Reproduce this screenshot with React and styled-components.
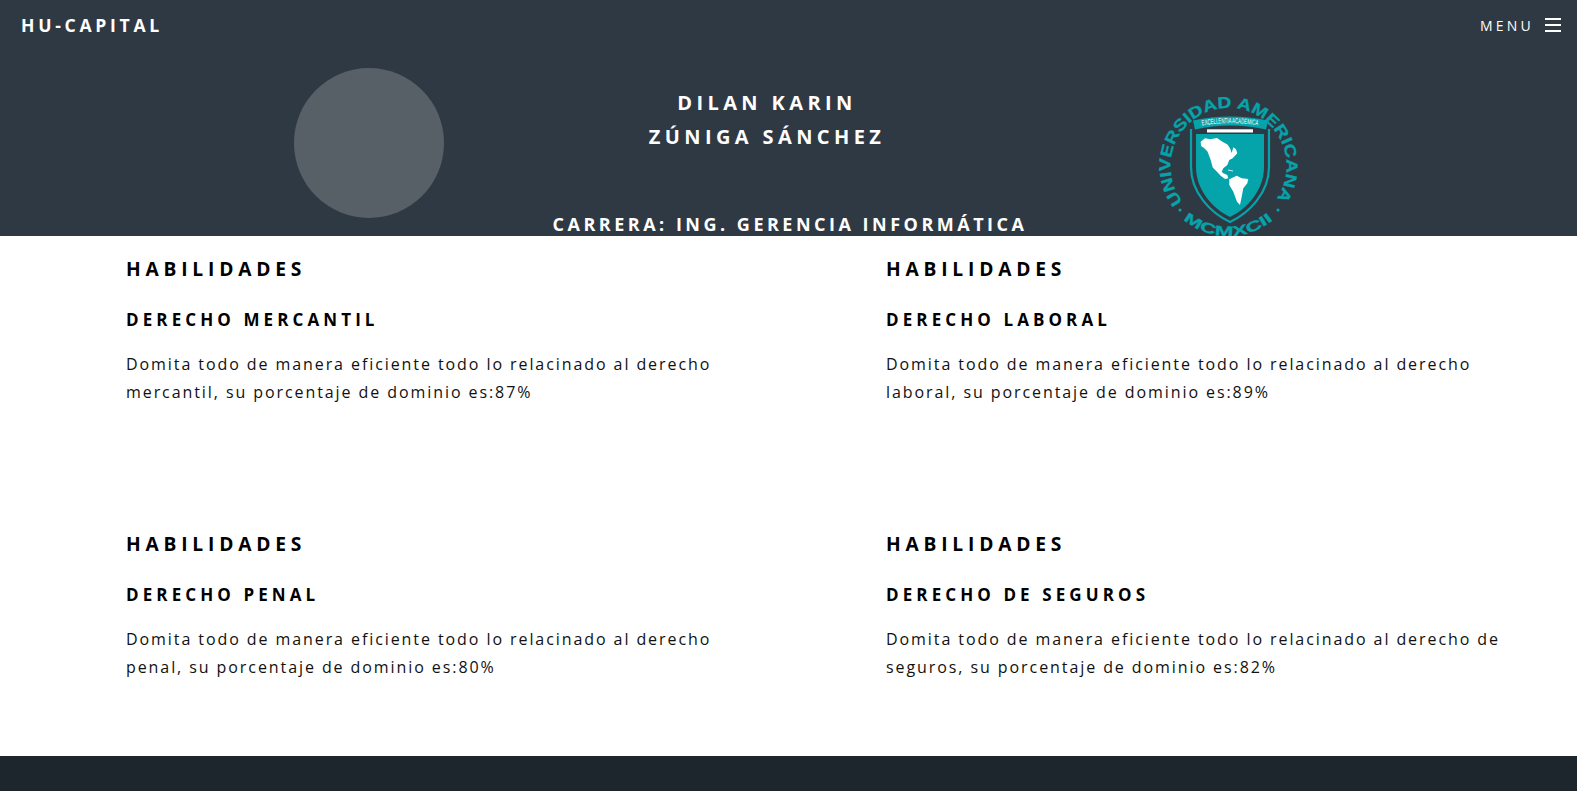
import React from "react";
import styled, { createGlobalStyle } from "styled-components";

const Global = createGlobalStyle`
  html, body { margin: 0; padding: 0; background: #fff; }
  body { font-family: "Open Sans", "Liberation Sans", sans-serif; overflow: hidden; }
`;
const Page = styled.div`
  width: 1577px; height: 791px; display: flex; flex-direction: column; overflow: hidden;
`;
const Header = styled.header`
  height: 236px; flex: none; background: #2f3944; overflow: hidden; color: #fff;
`;
const Nav = styled.nav`
  box-sizing: border-box; height: 50px; display: flex; align-items: center; justify-content: space-between;
  padding: 0 16px 1px 21px;
`;
const Brand = styled.div`
  font-size: 17.6px; font-weight: 700; letter-spacing: 3.7px;
`;
const MenuToggle = styled.div`
  display: flex; align-items: center; gap: 11px; padding-top: 1px;
`;
const MenuLabel = styled.span`
  font-size: 14px; letter-spacing: 3.2px; font-weight: 400;
`;
const Burger = styled.div`
  width: 16px; display: flex; flex-direction: column; gap: 4px;
`;
const BurgerBar = styled.span`
  display: block; height: 2px; background: #fff;
`;
const Hero = styled.div`
  display: flex; align-items: flex-start; padding-left: 294px;
`;
const Avatar = styled.div`
  width: 150px; height: 150px; border-radius: 50%; background: #575f67; margin-top: 18px; flex: none;
`;
const Center = styled.div`
  width: 692px; flex: none; display: flex; flex-direction: column; align-items: center; text-align: center;
`;
const Name = styled.h1`
  margin: 36px 46px 0 0; font-size: 20px; line-height: 34px; font-weight: 700; letter-spacing: 4.4px;
`;
const Career = styled.h2`
  margin: 58px 0 0; font-size: 18px; line-height: 24px; font-weight: 700; letter-spacing: 3.5px; white-space: nowrap;
`;
const Logo = styled.svg`
  width: 160px; height: 160px; margin: 35px 0 0 4px; flex: none; display: block;
`;
const Skills = styled.main`
  height: 520px; flex: none; display: grid; grid-template-columns: 760px 760px; grid-template-rows: 275px 245px; padding: 0 0 0 126px;
`;
const Skill = styled.article`
  padding-top: 20px;
`;
const SkillHeading = styled.h3`
  margin: 0; font-size: 19.2px; line-height: 26px; font-weight: 700; letter-spacing: 4.8px; color: #000;
`;
const SkillName = styled.h4`
  margin: 26px 0 0; font-size: 17px; line-height: 24px; font-weight: 700; letter-spacing: 4.1px; color: #000;
`;
const SkillText = styled.p`
  margin: 18px 0 0; max-width: 625px; font-size: 16px; line-height: 28px; letter-spacing: 1.92px; color: #111;
`;
const Footer = styled.footer`
  height: 35px; flex: none; background: #1d262d;
`;

const teal = "#05a4ab";
const ribbonStack = "'Liberation Sans Narrow', 'Liberation Sans', sans-serif";

const UniversityLogo = () => (
  <Logo viewBox="0 0 160 160" aria-label="Universidad Americana">
    <defs>
      <path id="ringTop" d="M 42.8 116.7 A 58 58 0 1 1 134.2 116.7" />
      <path id="ringBottom" d="M 43.5 134.6 A 70 70 0 0 0 133.5 134.6" />
      <path id="ribbonText" d="M 62 40.5 Q 90 36 118 40.5" />
    </defs>
    <text fontFamily="'Liberation Sans', sans-serif" fontWeight="700" fontSize="16" fill={teal} stroke={teal} strokeWidth="0.3">
      <textPath href="#ringTop" textLength="255" lengthAdjust="spacingAndGlyphs">UNIVERSIDAD AMERICANA</textPath>
    </text>
    <text fontFamily="'Liberation Sans', sans-serif" fontWeight="700" fontSize="14" fill={teal} stroke={teal} strokeWidth="0.3">
      <textPath href="#ringBottom" textLength="97" lengthAdjust="spacingAndGlyphs">MCMXCII</textPath>
    </text>
    <circle cx="40" cy="125" r="1.6" fill={teal} />
    <circle cx="138" cy="125" r="1.6" fill={teal} />
    <path d="M51 44 V82 C51 108 71 128 90 137 C109 128 129 108 129 82 V44" fill="none" stroke={teal} strokeWidth="2.2" />
    <path d="M56 49 H124 V82 C124 105 107 124 90 132 C73 124 56 105 56 82 Z" fill={teal} />
    <path d="M54 40 Q90 32 127 40" fill="none" stroke={teal} strokeWidth="9" />
    <text fontFamily={ribbonStack} fontSize="7.5" fill="#fff">
      <textPath href="#ribbonText" textLength="56" lengthAdjust="spacingAndGlyphs">EXCELLENTIA ACADEMICA</textPath>
    </text>
    <rect x="67" y="44.3" width="46" height="3.2" fill="#fff" />
    <path fill="#fff" d="M60.7 56.7 L65 53.3 L70 54.3 L77 53 L82 56.5 L87.5 59.5 L90 63.3 L91.7 68 L93.3 62.3 L96 64.3 L97.3 68.3 L92.7 73.3 L89.3 75 L87.3 80 L83.3 83.3 L81.7 86.7 L83.3 88.3 L87.3 90 L88.3 93.3 L85 94 L80.7 90.7 L76.7 86.5 L72.7 82.5 L70.7 75 L67.5 66.5 L64 63 L61 61 Z" />
    <path fill="#fff" d="M89.3 94.3 L96.7 90.7 L101.7 93.3 L108.3 94 L107.3 98.3 L103.3 103.3 L101.7 111.7 L100 120 L97 116.7 L93.3 106.7 L89.3 100 Z" />
    <path fill="none" stroke="#fff" strokeWidth="0.8" d="M88 85 L93 86" />
  </Logo>
);

const skills = [
  { name: "DERECHO MERCANTIL", text: "Domita todo de manera eficiente todo lo relacinado al derecho mercantil, su porcentaje de dominio es:87%" },
  { name: "DERECHO LABORAL", text: "Domita todo de manera eficiente todo lo relacinado al derecho laboral, su porcentaje de dominio es:89%" },
  { name: "DERECHO PENAL", text: "Domita todo de manera eficiente todo lo relacinado al derecho penal, su porcentaje de dominio es:80%" },
  { name: "DERECHO DE SEGUROS", text: "Domita todo de manera eficiente todo lo relacinado al derecho de seguros, su porcentaje de dominio es:82%" },
];

export default function App() {
  return (
    <Page>
      <Global />
      <Header>
        <Nav>
          <Brand>HU-CAPITAL</Brand>
          <MenuToggle>
            <MenuLabel>MENU</MenuLabel>
            <Burger><BurgerBar /><BurgerBar /><BurgerBar /></Burger>
          </MenuToggle>
        </Nav>
        <Hero>
          <Avatar />
          <Center>
            <Name>DILAN KARIN<br />ZÚNIGA SÁNCHEZ</Name>
            <Career>CARRERA: ING. GERENCIA INFORMÁTICA</Career>
          </Center>
          <UniversityLogo />
        </Hero>
      </Header>
      <Skills>
        {skills.map((s) => (
          <Skill key={s.name}>
            <SkillHeading>HABILIDADES</SkillHeading>
            <SkillName>{s.name}</SkillName>
            <SkillText>{s.text}</SkillText>
          </Skill>
        ))}
      </Skills>
      <Footer />
    </Page>
  );
}
